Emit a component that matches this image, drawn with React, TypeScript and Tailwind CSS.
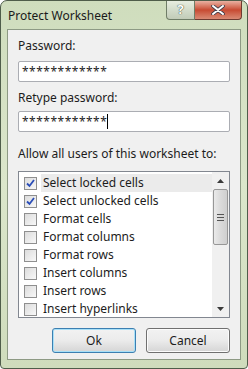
import React from 'react';

const items = [
  { label: 'Select locked cells', checked: true },
  { label: 'Select unlocked cells', checked: true },
  { label: 'Format cells', checked: false },
  { label: 'Format columns', checked: false },
  { label: 'Format rows', checked: false },
  { label: 'Insert columns', checked: false },
  { label: 'Insert rows', checked: false },
  { label: 'Insert hyperlinks', checked: false },
];

const Check = ({ checked }: { checked: boolean }) => (
  <div className="w-[13px] h-[13px] border border-[#8f8f8f] bg-gradient-to-br from-[#dcdcdc] to-[#f8f8f8] flex items-center justify-center shrink-0">
    {checked && (
      <svg viewBox="0 0 11 11" className="w-[11px] h-[11px]">
        <path d="M2 5.5 L4.5 8 L9 2" fill="none" stroke="#2a4db8" strokeWidth="1.8" />
      </svg>
    )}
  </div>
);

const App = () => {
  return (
    <div
      className="w-[248px] h-[369px] bg-gradient-to-b from-[#cfddbd] via-[#dbe6cb] to-[#cfdcbc] border border-[#4f5d4a] rounded-t-[7px] rounded-b-[4px] flex flex-col"
      style={{ fontFamily: '"Noto Sans", "Open Sans", sans-serif' }}
    >
      {/* title bar */}
      <div className="h-[28px] flex items-start shrink-0">
        <div className="pl-[7px] pt-[6px] text-[12px] text-[#1a1a1a] flex-1">Protect Worksheet</div>
        <div className="flex mr-[5px]">
          <div className="w-[29px] h-[19px] border border-[#6f7d67] border-t-0 rounded-bl-[4px] bg-gradient-to-b from-[#e7ede0] via-[#d3dccb] to-[#c2ccb8] flex items-center justify-center text-[13px] font-bold text-white [text-shadow:0_0_1px_#3b4a36,0_0_1px_#3b4a36]">
            ?
          </div>
          <div className="w-[47px] h-[19px] border border-[#6e3a30] border-t-0 border-l-0 rounded-br-[4px] bg-gradient-to-b from-[#e8b0a2] via-[#c74a32] to-[#d98a74] flex items-center justify-center">
            <svg viewBox="0 0 14 10" className="w-[14px] h-[10px]">
              <path d="M2 1 L12 9 M12 1 L2 9" stroke="#3c3c4a" strokeWidth="3.6" strokeLinecap="round" />
              <path d="M2 1 L12 9 M12 1 L2 9" stroke="#ffffff" strokeWidth="2" strokeLinecap="round" />
            </svg>
          </div>
        </div>
      </div>

      {/* client area */}
      <div className="mx-[6px] mb-[8px] flex-1 bg-[#f0f0f0] border border-[#8d9a84] px-[10px] pt-[8px] text-[12px] text-[#1c1c1c]">
        <div className="leading-[16px]">Password:</div>
        <div className="mt-[7px] h-[21px] bg-white border border-[#abadb3] rounded-[2px] flex items-center pl-[3px] text-[12px] tracking-[0.5px]">
          ************
        </div>
        <div className="mt-[8px] leading-[16px]">Retype password:</div>
        <div className="mt-[5px] h-[21px] bg-white border border-[#abadb3] rounded-[2px] flex items-center pl-[3px] text-[12px] tracking-[0.5px]">
          ************<span className="w-px h-[15px] bg-black" />
        </div>
        <div className="mt-[14px] leading-[16px]">Allow all users of this worksheet to:</div>

        {/* list */}
        <div className="mt-[9px] h-[147px] bg-white border border-[#828790] flex">
          <div className="flex-1 pt-[2px]">
            {items.map((it, i) => (
              <div key={it.label} className="h-[18px] flex items-center pl-[5px]">
                <Check checked={it.checked} />
                <div className={`ml-[4px] pl-[2px] pr-[6px] h-[18px] flex items-center flex-1 ${i === 0 ? 'bg-[#ebebeb]' : ''}`}>
                  {it.label}
                </div>
              </div>
            ))}
          </div>
          {/* scrollbar */}
          <div className="w-[17px] bg-[#f0f0f0] flex flex-col">
            <div className="h-[17px] flex items-center justify-center">
              <svg viewBox="0 0 7 4" className="w-[7px] h-[4px]"><path d="M0 4 L3.5 0 L7 4 Z" fill="#3a3a3a" /></svg>
            </div>
            <div className="mx-[1px] h-[56px] border border-[#979797] rounded-[2px] bg-gradient-to-r from-[#eaeaea] via-[#dadada] to-[#cfcfcf] flex flex-col items-center justify-center gap-[2px]">
              <div className="w-[7px] h-px bg-[#555]" />
              <div className="w-[7px] h-px bg-[#555]" />
              <div className="w-[7px] h-px bg-[#555]" />
            </div>
            <div className="flex-1" />
            <div className="h-[17px] flex items-center justify-center">
              <svg viewBox="0 0 7 4" className="w-[7px] h-[4px]"><path d="M0 0 L3.5 4 L7 0 Z" fill="#3a3a3a" /></svg>
            </div>
          </div>
        </div>

        {/* buttons */}
        <div className="mt-[10px] flex justify-end gap-[10px]">
          <div className="w-[84px] h-[25px] rounded-[3px] border border-[#3c7fb1] bg-gradient-to-b from-[#f2f2f2] via-[#ebebeb] to-[#d5d5d5] shadow-[inset_0_0_0_1px_#a8e0f8] flex items-center justify-center">
            Ok
          </div>
          <div className="w-[84px] h-[25px] rounded-[3px] border border-[#707070] bg-gradient-to-b from-[#f2f2f2] via-[#ebebeb] to-[#d5d5d5] shadow-[inset_0_0_0_1px_#fcfcfc] flex items-center justify-center">
            Cancel
          </div>
        </div>
      </div>
    </div>
  );
};

export default App;
